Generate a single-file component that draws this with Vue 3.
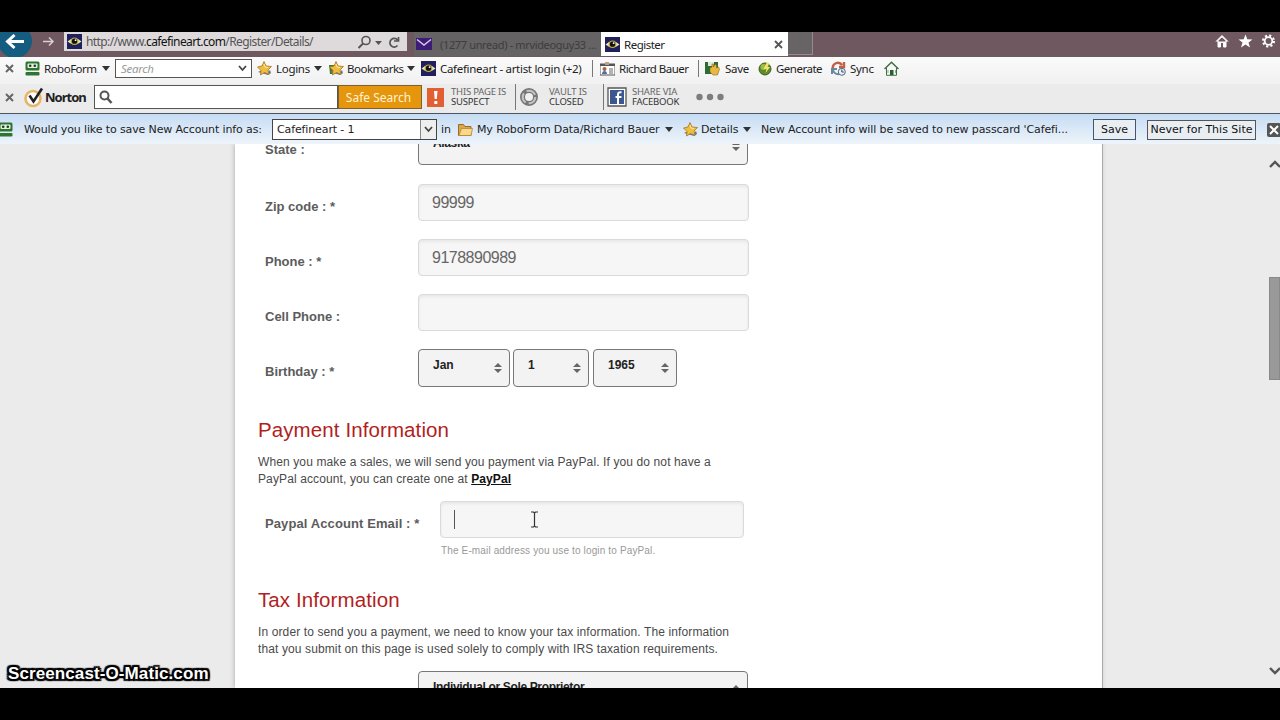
<template>
  <div class="screen">
    <!-- address bar and tabs -->
    <header class="titlebar">
      <svg class="nav" width="64" height="25" viewBox="0 0 64 25">
        <circle cx="15" cy="9" r="17" fill="#145c80" />
        <path d="M24 9.500H8M14.500 3L7.500 9.500L14.500 16" fill="none" stroke="#fff" stroke-width="3" />
        <path d="M43 9.500H53M49 5.500L53 9.500L49 13.500" fill="none" stroke="#d9d0d3" stroke-width="1.500" />
      </svg>
      <div class="address">
        <svg class="eye" viewBox="0 0 15 15"><use href="#eye" /></svg>
        <span class="url">http://www.<b>cafefineart.com</b>/Register/Details/</span>
        <svg width="46" height="18" viewBox="0 0 46 18">
          <circle cx="10" cy="7.500" r="4" fill="none" stroke="#555" stroke-width="1.600" />
          <path d="M7 10.500L2.500 15" stroke="#555" stroke-width="2" />
          <path d="M19 8h7l-3.500 4z" fill="#555" />
          <path d="M41.500 7A4.300 4.300 0 1 0 41.500 12.500M42.500 4V8H38" fill="none" stroke="#555" stroke-width="1.700" />
        </svg>
      </div>
      <div class="tab inactive">
        <svg width="16" height="14" viewBox="0 0 16 14">
          <path d="M0 1h16v12H0z" fill="#3d1c78" />
          <path d="M1 2.500L8 8L15 2.500" fill="none" stroke="#d6c9e8" stroke-width="1.500" />
        </svg>
        <span>(1277 unread) - mrvideoguy33 ...</span>
      </div>
      <div class="tab active">
        <svg class="eye" viewBox="0 0 15 15"><use href="#eye" /></svg>
        <span>Register</span>
        <svg width="9" height="9" viewBox="0 0 9 9"><path d="M1 1L8 8M8 1L1 8" stroke="#555" stroke-width="1.800" /></svg>
      </div>
      <div class="newtab"></div>
      <svg class="tools" width="66" height="19" viewBox="0 0 66 19">
        <path d="M2 9.500L8 3.500L14 9.500M4 8.500V15H6.500V10.500H9.500V15H12V8.500L8 4.800Z" fill="#fff" stroke="#fff" stroke-width="1" />
        <path d="M31.500 2.500L33.300 7.200L38.500 7.400L34.500 10.500L36 15.500L31.500 12.600L27 15.500L28.500 10.500L24.500 7.400L29.700 7.200Z" fill="#fff" />
        <circle cx="54.500" cy="9" r="3.800" fill="none" stroke="#fff" stroke-width="1.800" />
        <circle cx="54.500" cy="9" r="5.500" fill="none" stroke="#fff" stroke-width="2" stroke-dasharray="2.160 2.160" />
      </svg>
    </header>

    <!-- RoboForm toolbar -->
    <div class="roboform">
      <svg class="close" viewBox="0 0 9 9"><use href="#cross" /></svg>
      <svg class="icon" viewBox="0 0 15 15"><use href="#robot" /></svg>
      <span class="tight">RoboForm</span>
      <i class="caret"></i>
      <div class="rf-search">
        <em>Search</em>
        <svg width="9" height="7" viewBox="0 0 9 7"><path d="M1 1L4.500 5L8 1" fill="none" stroke="#444" stroke-width="1.800" /></svg>
      </div>
      <svg class="icon" viewBox="0 0 15 15"><use href="#star" /></svg>
      <span>Logins</span>
      <i class="caret"></i>
      <svg class="icon" viewBox="0 0 15 15">
        <path d="M0 4h6v9H1z" fill="#3f7a31" />
        <use href="#star" />
      </svg>
      <span class="tight">Bookmarks</span>
      <i class="caret"></i>
      <svg class="icon" viewBox="0 0 15 15"><use href="#eye" /></svg>
      <span>Cafefineart - artist login (+2)</span>
      <i class="sep"></i>
      <svg class="icon" viewBox="0 0 15 15">
        <path d="M0 3h15v11H0z" fill="#fff" stroke="#555" />
        <path d="M0 3h15v2H0z" fill="#555" />
        <path d="M5 1h4v3H5z" fill="#c98" />
        <circle cx="4.500" cy="8" r="2" fill="#a8623c" />
        <path d="M2 13c0-4 5-4 5 0z" fill="#4870a0" />
        <path d="M9 8h4M9 10h4M9 12h4" stroke="#666" />
      </svg>
      <span class="tight">Richard Bauer</span>
      <i class="sep"></i>
      <svg class="icon" viewBox="0 0 15 15">
        <path d="M0 1h13v12H0z" fill="#2e6b35" />
        <path d="M3 1h6v4H3z" fill="#dfe9da" />
        <path d="M5 7l2-1V3h1.500v3L10 3.500l1.500.5v3l2-1 1 2-2 6H8L5 11z" fill="#e8b83f" stroke="#8b681d" stroke-width=".6" />
      </svg>
      <span>Save</span>
      <svg class="icon" viewBox="0 0 15 15">
        <circle cx="7" cy="8" r="6" fill="#5f8a2b" stroke="#3e611d" />
        <circle cx="5.500" cy="6" r="3" fill="#9abb45" />
        <path d="M9 1L5.500 8h3l-1 4 4.500-6H9.500l2-4z" fill="#f4e46a" />
      </svg>
      <span class="tight">Generate</span>
      <svg class="icon" viewBox="0 0 15 15">
        <path d="M2 8a5 5 0 0 1 9-4M13 1v5H8" fill="none" stroke="#c25f47" stroke-width="2.400" />
        <path d="M1 13V8h5M2 9a5 5 0 0 0 6 4" fill="none" stroke="#69889e" stroke-width="2" />
        <circle cx="10.800" cy="10.800" r="3.500" fill="#eef3f7" stroke="#45657e" />
        <path d="M10.800 8.500v2.500h2" fill="none" stroke="#345" />
      </svg>
      <span>Sync</span>
      <svg class="icon" viewBox="0 0 15 15">
        <path d="M2.500 7v7.300h10V7" fill="#f6f8f2" stroke="#456b45" />
        <path d="M.5 8L7.500 1.200L14.500 8" fill="none" stroke="#466b46" stroke-width="1.500" />
        <path d="M6 9h3.500v5H6z" fill="#28602d" />
        <path d="M4 9v3M11.500 9v3" stroke="#8aa" />
      </svg>
    </div>

    <!-- Norton toolbar -->
    <div class="norton">
      <svg class="close" viewBox="0 0 9 9"><use href="#cross" /></svg>
      <svg width="21" height="21" viewBox="0 0 21 21">
        <circle cx="9" cy="11.500" r="7.500" fill="#fff" stroke="#e8b566" stroke-width="2.600" />
        <path d="M5.500 8.500L9.500 14.500L18 1.500" fill="none" stroke="#222" stroke-width="2.600" />
      </svg>
      <b class="t-norton">Norton</b>
      <div class="nt-search">
        <svg width="14" height="15" viewBox="0 0 14 15">
          <circle cx="5.500" cy="5.500" r="4" fill="none" stroke="#555" stroke-width="2" />
          <path d="M8.500 8.500L12.500 13" stroke="#555" stroke-width="2.600" />
        </svg>
      </div>
      <div class="safe"><span>Safe Search</span></div>
      <svg width="17" height="19" viewBox="0 0 17 19">
        <path d="M0 0h17v19H0z" fill="#e25f33" />
        <path d="M7 3h3.500l-.7 8H7.700zM7.300 13h3v3h-3z" fill="#fff" />
      </svg>
      <div class="stack"><span>THIS PAGE IS</span><b>SUSPECT</b></div>
      <i class="sep"></i>
      <svg width="20" height="20" viewBox="0 0 20 20">
        <circle cx="10" cy="10" r="6.500" fill="#f0f0f0" stroke="#777" stroke-width="5" />
        <circle cx="10" cy="10" r="6.300" fill="none" stroke="#c4c4c4" stroke-width="2" stroke-dasharray="10 3.200" />
      </svg>
      <div class="stack"><span>VAULT IS</span><b>CLOSED</b></div>
      <i class="sep"></i>
      <svg width="20" height="20" viewBox="0 0 20 20">
        <path d="M1 1h18v18H1z" fill="#fff" stroke="#555" stroke-width="1.300" />
        <path d="M3 3h14v14H3z" fill="#3c568f" />
        <path d="M11 17V7.500Q11 5 14.500 5.300M8.500 10H14.500" fill="none" stroke="#fff" stroke-width="2" />
      </svg>
      <div class="stack"><span>SHARE VIA</span><b>FACEBOOK</b></div>
      <svg width="30" height="8" viewBox="0 0 30 8" fill="#7d7d7d">
        <circle cx="3.500" cy="4" r="3.200" /><circle cx="14" cy="4" r="3.200" /><circle cx="24.500" cy="4" r="3.200" />
      </svg>
    </div>

    <!-- save passcard prompt -->
    <div class="prompt">
      <svg class="icon cut" viewBox="2 0 13 15"><use href="#robot" /></svg>
      <span>Would you like to save New Account info as:</span>
      <div class="combo">
        <span>Cafefineart - 1</span>
        <div class="drop"><svg width="9" height="7" viewBox="0 0 9 7"><path d="M1 1L4.500 5L8 1" fill="none" stroke="#444" stroke-width="1.800" /></svg></div>
      </div>
      <span>in</span>
      <svg class="icon" viewBox="0 0 15 15">
        <path d="M.5 13.500V2.500h5l1.500 2h6v9z" fill="#dca64a" stroke="#9c6c24" />
        <path d="M1 13.500L3.500 6.500h11L13 13.500z" fill="#f8d98b" stroke="#b98535" stroke-width=".8" />
      </svg>
      <span>My RoboForm Data/Richard Bauer</span>
      <i class="caret"></i>
      <svg class="icon" viewBox="0 0 15 15"><use href="#star" /></svg>
      <span>Details</span>
      <i class="caret"></i>
      <span>New Account info will be saved to new passcard 'Cafefi...</span>
      <button class="save" type="button"><span>Save</span></button>
      <button class="never" type="button"><span>Never for This Site</span></button>
      <svg width="14" height="14" viewBox="0 0 14 14">
        <rect width="14" height="14" rx="2" fill="#555" />
        <path d="M3 3L11 11M11 3L3 11" stroke="#fff" stroke-width="2" />
      </svg>
    </div>

    <main class="page">
      <section class="card">
        <form class="form" @submit.prevent>
          <div class="row state">
            <label>State :</label>
            <div class="select wide"><span>Alaska</span><i class="updown"></i></div>
          </div>
          <div v-for="f in fields" :key="f.label" class="row">
            <label>{{ f.label }}</label>
            <input v-model="f.value" type="text" />
          </div>
          <div class="row">
            <label>Birthday : *</label>
            <div class="birthday">
              <div class="select month"><span>{{ birthday.month }}</span><i class="updown"></i></div>
              <div class="select day"><span>{{ birthday.day }}</span><i class="updown"></i></div>
              <div class="select year"><span>{{ birthday.year }}</span><i class="updown"></i></div>
            </div>
          </div>

          <h2 class="h-pay">Payment Information</h2>
          <p>
            When you make a sales, we will send you payment via PayPal. If you do not have a<br />
            PayPal account, you can create one at <a>PayPal</a>
          </p>
          <div class="row paypal">
            <label>Paypal Account Email : *</label>
            <div class="email">
              <i class="cursor"></i>
              <svg width="9" height="17" viewBox="0 0 9 17">
                <path d="M1 1H3.500L4.500 2L5.500 1H8M4.500 2V15M1 16H3.500L4.500 15L5.500 16H8" fill="none" stroke="#333" stroke-width="1.200" />
              </svg>
            </div>
          </div>
          <div class="hint">The E-mail address you use to login to PayPal.</div>

          <h2 class="h-tax">Tax Information</h2>
          <p>
            In order to send you a payment, we need to know your tax information. The information<br />
            that you submit on this page is used solely to comply with IRS taxation requirements.
          </p>
          <div class="row tax">
            <label></label>
            <div class="select wide"><span>Individual or Sole Proprietor</span><i class="updown"></i></div>
          </div>
        </form>
      </section>
      <div class="scroll">
        <svg width="11" height="8" viewBox="0 0 11 8"><path d="M1 7L6 2L11 7" fill="none" stroke="#555" stroke-width="2.400" /></svg>
        <div class="thumb"></div>
        <svg width="11" height="8" viewBox="0 0 11 8"><path d="M1 1L6 6L11 1" fill="none" stroke="#555" stroke-width="2.400" /></svg>
      </div>
      <div class="watermark">Screencast-O-Matic.com</div>
    </main>

    <svg class="defs" width="0" height="0">
      <defs>
        <g id="eye">
          <path d="M0 0h15v15H0z" fill="#20205c" />
          <path d="M.5 7.500Q7.500 1 14.500 7.500Q7.500 13.500 .5 7.500" fill="#eee6b8" />
          <circle cx="7.500" cy="7.200" r="3.800" fill="#b7a545" />
          <circle cx="7.500" cy="7.200" r="2.600" fill="#111" />
          <circle cx="8.600" cy="6.200" r=".9" fill="#fff" />
        </g>
        <g id="robot">
          <rect x=".5" y=".5" width="14" height="9" rx="1.500" fill="#2f7532" />
          <rect x="2.500" y="2.500" width="10" height="4.500" rx="1" fill="#e4f0df" />
          <circle cx="5.200" cy="4.700" r="1.300" fill="#153f19" />
          <circle cx="9.800" cy="4.700" r="1.300" fill="#153f19" />
          <rect x=".5" y="11" width="14" height="3.500" rx="1" fill="#2f7532" />
        </g>
        <g id="star">
          <path d="M1 11l4-2 6 2 2-2 1 3-3 2z" fill="#5c7b99" />
          <path d="M7 .5L9 5l5.500 .5L11 9l1 4.500L7.500 11.500L3.500 14l.5-4.500L.5 6L5 5z" fill="#f0bd3e" stroke="#a77420" stroke-width=".8" />
          <path d="M7 3L8 6l3 .5" fill="none" stroke="#ffe89b" />
        </g>
        <g id="cross"><path d="M1 1L8 8M8 1L1 8" stroke="#666" stroke-width="2" /></g>
      </defs>
    </svg>
  </div>
</template>

<script setup>
import { reactive } from 'vue'

const fields = reactive([
  { label: 'Zip code : *', value: '99999' },
  { label: 'Phone : *', value: '9178890989' },
  { label: 'Cell Phone :', value: '' }
])

const birthday = reactive({
  month: 'Jan',
  day: '1',
  year: '1965'
})
</script>

<style>
body {
  background: #000;
  overflow: hidden;
}
</style>

<style scoped>
.screen {
  width: 1280px;
  height: 720px;
  padding: 32px 0;
  box-sizing: border-box;
  background: #000;
  overflow: hidden;
  font-family: "Noto Sans", sans-serif;
  font-size: 12px;
  color: #222;
}
.screen span,
.screen b,
.screen em,
.screen label {
  white-space: nowrap;
}
svg {
  display: block;
  flex: none;
}
.defs {
  position: absolute;
}
.icon,
.eye {
  width: 15px;
  height: 15px;
}
.close {
  width: 9px;
  height: 9px;
}
.caret {
  width: 0;
  height: 0;
  border: 4px solid transparent;
  border-top: 5px solid #333;
  border-bottom: 0;
}
.sep {
  width: 1px;
  background: #777;
}

/* title bar */
.titlebar {
  display: flex;
  height: 25px;
  background: #705860;
}
.nav {
  overflow: hidden;
}
.address {
  display: flex;
  width: 343px;
  height: 19px;
  margin-right: 7px;
  padding-left: 3px;
  box-sizing: border-box;
  align-items: center;
  background: #dedadc;
}
.url {
  width: 270px;
  margin-left: 4px;
  letter-spacing: -0.6px;
  color: #555;
}
.url b {
  font-weight: 400;
  color: #111;
}
.tab {
  display: flex;
  height: 24px;
  box-sizing: border-box;
  align-items: center;
}
.inactive {
  width: 187px;
  padding-left: 2px;
  background: #666364;
  color: #3e3c3d;
}
.inactive span {
  margin-left: 8px;
  font-size: 11px;
  letter-spacing: -0.35px;
}
.active {
  width: 187px;
  padding-left: 4px;
  background: #fff;
}
.active span {
  width: 150px;
  margin-left: 4px;
  font-size: 11.5px;
  letter-spacing: -0.5px;
}
.newtab {
  width: 25px;
  height: 23px;
  box-sizing: border-box;
  background: #686465;
  border-right: 1px solid #958b8e;
  border-bottom: 1px solid #958b8e;
}
.tools {
  margin-left: auto;
}

/* toolbars */
.roboform {
  display: grid;
  grid-template-columns:
    20px 19px 58px 13px 142px 19px 38px 15px 18px 60px 14px 19px 152px 8px
    19px 79px 7px 20px 33px 18px 55px 19px 34px 20px;
  height: 27px;
  padding: 0 0 4px 5px;
  box-sizing: border-box;
  align-items: center;
  background: linear-gradient(#fafafa, #f1f1f1);
  font-size: 11.5px;
  letter-spacing: -0.3px;
}
.roboform .tight {
  letter-spacing: -0.5px;
}
.roboform .sep {
  height: 17px;
}
.rf-search {
  display: flex;
  width: 137px;
  height: 19px;
  padding: 0 4px 0 5px;
  box-sizing: border-box;
  align-items: center;
  justify-content: space-between;
  background: #fff;
  border: 1px solid #555;
  color: #999;
}
.norton {
  display: grid;
  grid-template-columns:
    19px 21px 49px 244px 89px 24px 64px 4px 30px 54px 4px 25px 64px 30px;
  height: 30px;
  padding: 0 0 3px 5px;
  box-sizing: border-box;
  align-items: center;
  background: #ebebeb;
  border-bottom: 1px solid #4b5560;
}
.norton .sep {
  height: 26px;
}
.t-norton {
  font-size: 13px;
  letter-spacing: -1px;
}
.nt-search {
  height: 24px;
  padding: 4px;
  box-sizing: border-box;
  background: #fff;
  border: 1px solid #555;
}
.safe {
  width: 84px;
  height: 24px;
  box-sizing: border-box;
  background: #e5960c;
  border: 1px solid #7b6230;
  color: #fff3d8;
  line-height: 23px;
  text-align: center;
}
.safe span {
  margin-right: 3px;
}
.stack {
  display: flex;
  flex-direction: column;
  font-size: 9.5px;
  line-height: 10px;
  letter-spacing: -0.2px;
  color: #666;
}
.stack b {
  font-weight: 400;
  color: #333;
}

/* prompt */
.prompt {
  display: grid;
  grid-template-columns:
    24px 248px 169px 17px 19px 188px 18px 18px 42px 18px 332px 54px 120px 14px;
  height: 30px;
  padding-top: 1px;
  box-sizing: border-box;
  align-items: center;
  background: linear-gradient(#c6dcf4, #eef4fa);
  font-family: "DejaVu Sans", sans-serif;
  font-size: 11px;
  letter-spacing: -0.12px;
}
.prompt .cut {
  width: 13px;
}
.combo {
  display: flex;
  width: 165px;
  height: 21px;
  padding-left: 4px;
  box-sizing: border-box;
  align-items: center;
  justify-content: space-between;
  background: #fff;
  border: 1px solid #444;
}
.drop {
  display: flex;
  width: 15px;
  height: 19px;
  align-items: center;
  justify-content: center;
  background: #eee;
  border-left: 1px solid #888;
}
button {
  height: 21px;
  padding: 0;
  background: #e9eef3;
  border: 1px solid #3f5870;
  font: inherit;
  letter-spacing: 0;
  color: #111;
}
.save {
  width: 43px;
}
.never {
  width: 109px;
  height: 20px;
  border-color: #555;
}

/* page */
.page {
  position: relative;
  display: flex;
  height: 544px;
  padding-left: 235px;
  box-sizing: border-box;
  background: #ebebeb;
  font-family: "Liberation Sans", sans-serif;
  overflow: hidden;
}
.card {
  width: 868px;
  height: 544px;
  box-sizing: border-box;
  background: #fff;
  border-right: 1px solid #aaa;
  box-shadow: -1px 0 4px #bbb;
  overflow: hidden;
}
.form {
  margin-top: -17px;
  padding-left: 23px;
}
.row {
  display: flex;
  height: 55px;
  padding-left: 7px;
}
.row label {
  width: 153px;
  padding-top: 15px;
  font-size: 13px;
  font-weight: 700;
  line-height: 15px;
  color: #5c5c5c;
}
.row.state {
  height: 57px;
}
input,
.email {
  width: 331px;
  height: 37px;
  padding: 0 13px;
  box-sizing: border-box;
  background: #f6f6f6;
  border: 1px solid #dadada;
  border-radius: 4px;
  box-shadow: inset 0 2px 3px #e8e8e8;
  font-family: "Liberation Sans", sans-serif;
  font-size: 16px;
  letter-spacing: -0.5px;
  color: #666;
}
.select {
  display: flex;
  height: 38px;
  padding: 0 7px 0 14px;
  box-sizing: border-box;
  align-items: center;
  justify-content: space-between;
  background: #f3f3f3;
  border: 1px solid #777;
  border-radius: 4px;
  font-size: 12px;
  font-weight: 700;
  color: #222;
}
.select span {
  margin-top: -6px;
}
.select.wide span {
  letter-spacing: -0.35px;
}
.birthday {
  display: flex;
}
.wide {
  width: 330px;
}
.month {
  width: 92px;
  margin-right: 3px;
}
.day {
  width: 76px;
  margin-right: 4px;
}
.year {
  width: 84px;
}
.updown {
  display: flex;
  flex-direction: column;
  gap: 2px;
}
.updown::before,
.updown::after {
  content: "";
  border: 4px solid transparent;
}
.updown::before {
  border-top: 0;
  border-bottom: 4px solid #666;
}
.updown::after {
  border-bottom: 0;
  border-top: 4px solid #666;
}
h2 {
  margin: 0;
  height: 24px;
  line-height: 24px;
  font-size: 20.5px;
  font-weight: 400;
  letter-spacing: 0.1px;
  color: #b21e1e;
}
.h-pay {
  margin-top: 14px;
}
.h-tax {
  margin-top: 26px;
}
p {
  margin: 12px 0 0;
  font-size: 12px;
  line-height: 17px;
  letter-spacing: 0.115px;
  color: #4a4a4a;
}
a {
  font-weight: 700;
  color: #111;
  text-decoration: underline;
}
.row.paypal {
  height: 37px;
  margin-top: 13px;
}
.row.paypal label {
  width: 175px;
  letter-spacing: 0.1px;
}
.email {
  display: flex;
  width: 304px;
  align-items: center;
}
.cursor {
  width: 1px;
  height: 19px;
  margin-right: 75px;
  background: #555;
}
.hint {
  height: 22px;
  padding: 2px 0 0 183px;
  font-size: 10px;
  line-height: 22px;
  letter-spacing: 0.14px;
  color: #999;
}
.row.tax {
  margin-top: 13px;
}
.scroll {
  display: flex;
  flex-direction: column;
  width: 11px;
  margin-left: auto;
  padding: 16px 0 13px;
  box-sizing: border-box;
}
.thumb {
  width: 11px;
  height: 103px;
  margin: 109px 0 auto;
  background: #999;
  border: 1px solid #888;
  box-sizing: border-box;
}
.watermark {
  position: absolute;
  left: 8px;
  bottom: 4px;
  font-size: 17px;
  font-weight: 700;
  line-height: 20px;
  letter-spacing: 0.1px;
  color: #fff;
  text-shadow: -2px 0 1px #000, 2px 0 1px #000, 0 -2px 1px #000, 0 2px 1px #000,
    -2px -2px 1px #000, 2px 2px 1px #000, -2px 2px 1px #000, 2px -2px 1px #000;
}
</style>
